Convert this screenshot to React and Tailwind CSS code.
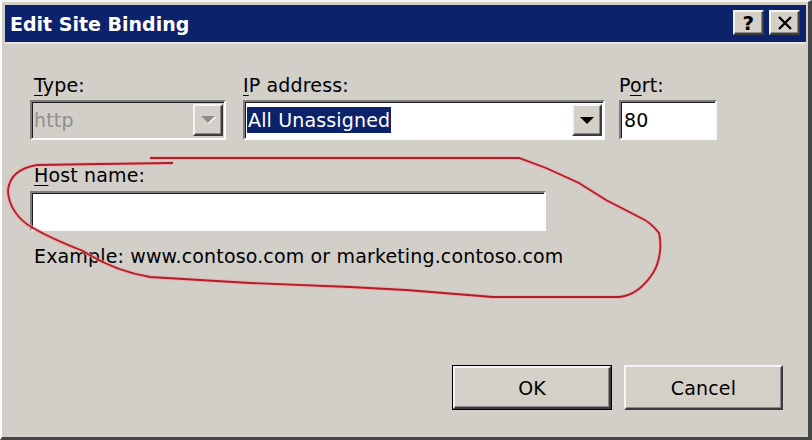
import React from 'react';

const sunken =
  'border-2 border-t-[#7c7c7c] border-l-[#7c7c7c] border-b-[#fbfbfb] border-r-[#fbfbfb] shadow-[inset_1px_1px_0_#1c1c1c]';
const raised =
  'border-2 border-t-[#f4f4f4] border-l-[#f4f4f4] border-b-[#3c3c3c] border-r-[#3c3c3c] shadow-[inset_-1px_-1px_0_#8a8a8a] bg-[#d4d0c8]';

function Arrow({ disabled }) {
  if (disabled) {
    return (
      <div className="relative w-[14px] h-[8px]">
        <div className="absolute left-[1px] top-[1px] w-0 h-0 border-l-[7px] border-r-[7px] border-t-[7px] border-l-transparent border-r-transparent border-t-white" />
        <div className="absolute left-0 top-0 w-0 h-0 border-l-[7px] border-r-[7px] border-t-[7px] border-l-transparent border-r-transparent border-t-[#8c8c8c]" />
      </div>
    );
  }
  return (
    <div className="w-0 h-0 border-l-[7px] border-r-[7px] border-t-[7px] border-l-transparent border-r-transparent border-t-black" />
  );
}

function DropButton({ disabled }) {
  return (
    <div className={`w-[30px] my-[2px] mr-[1px] flex items-center justify-center ${raised}`}>
      <Arrow disabled={disabled} />
    </div>
  );
}

function Underlined({ ch, rest }) {
  return (
    <span>
      <span className="underline underline-offset-[3px]">{ch}</span>
      {rest}
    </span>
  );
}

const loop =
  'M173 163 L100 164 L37 165 C20 168 10 175 8 190 C8 205 18 220 33 228 C45 235 60 242 83 251 C100 262 120 272 150 277 L250 283 L350 287 L406 290 L493 297 L619 297 C630 296 642 290 653 273 C660 262 662 245 659 233 C653 225 646 220 639 217 L606 200 L579 183 L546 168 L519 158 L150 158';

export default function App() {
  return (
    <div className="relative w-[812px] h-[440px] overflow-hidden bg-[#d2cec8] flex flex-col border-t-2 border-l-2 border-r-4 border-b-[3px] border-t-[#f3f3f3] border-l-white border-r-[#464646] border-b-[#464646] pt-[3px] pl-[3px] pr-[2px] font-['DejaVu_Sans',sans-serif] text-[19px] leading-[22px] tracking-[0.15px] text-black">
      {/* title bar */}
      <div className="h-[37px] bg-[#0c226a] flex items-center justify-between pl-[5px] pr-[6px]">
        <span className="text-white font-bold text-[19px] tracking-normal">Edit Site Binding</span>
        <div className="flex gap-[5px] -mt-[2px]">
          <div className={`w-[31px] h-[25px] flex items-center justify-center font-bold text-[20px] ${raised}`}>?</div>
          <div className={`w-[31px] h-[25px] flex items-center justify-center ${raised}`}>
            <svg width="16" height="14" viewBox="0 0 16 14">
              <path d="M2 1 L14 13 M14 1 L2 13" stroke="black" strokeWidth="2.4" />
            </svg>
          </div>
        </div>
      </div>
      <div className="h-[2px] bg-[#e6e4e0]" />

      {/* body */}
      <div className="flex-1 flex flex-col pl-[25px] pr-[23px] pt-[30px] pb-[27px]">
        <div className="flex">
          <div className="w-[196px] flex flex-col">
            <div className="pl-1"><Underlined ch="T" rest="ype:" /></div>
            <div className={`mt-[4px] h-[40px] flex ${sunken} bg-[#d2cec8]`}>
              <div className="flex-1 flex items-center pl-[2px] text-[#8f8f8f]">http</div>
              <DropButton disabled />
            </div>
          </div>
          <div className="w-[362px] ml-[17px] flex flex-col">
            <div><Underlined ch="I" rest="P address:" /></div>
            <div className={`mt-[4px] h-[40px] flex bg-white ${sunken}`}>
              <div className="flex-1 flex items-center pl-[2px]">
                <span className="bg-[#0c226a] text-white h-[26px] leading-[26px] px-[1px]">All Unassigned</span>
              </div>
              <DropButton />
            </div>
          </div>
          <div className="w-[98px] ml-[14px] flex flex-col">
            <div>P<span className="underline underline-offset-[3px]">o</span>rt:</div>
            <div className={`mt-[4px] h-[40px] flex items-center pl-[3px] bg-white ${sunken}`}>80</div>
          </div>
        </div>

        <div className="mt-[24px] pl-1"><Underlined ch="H" rest="ost name:" /></div>
        <div className={`mt-[5px] w-[516px] h-[40px] bg-white ${sunken}`} />
        <div className="mt-[14px] pl-1">Example: www.contoso.com or marketing.contoso.com</div>

        <div className="mt-auto flex justify-end gap-[12px]">
          <div className="w-[160px] h-[45px] border border-black">
            <div className={`w-full h-full flex items-center justify-center ${raised}`}>OK</div>
          </div>
          <div className={`w-[159px] h-[45px] flex items-center justify-center ${raised}`}>Cancel</div>
        </div>
      </div>

      {/* red annotation drawn over the dialog */}
      <svg className="absolute left-[-2px] top-[-2px] pointer-events-none" width="812" height="440" viewBox="0 0 812 440">
        <path d={loop} fill="none" stroke="#f2a0a0" strokeOpacity="0.6" strokeWidth="4" />
        <path d={loop} fill="none" stroke="#b01c28" strokeWidth="1.8" />
      </svg>
    </div>
  );
}
